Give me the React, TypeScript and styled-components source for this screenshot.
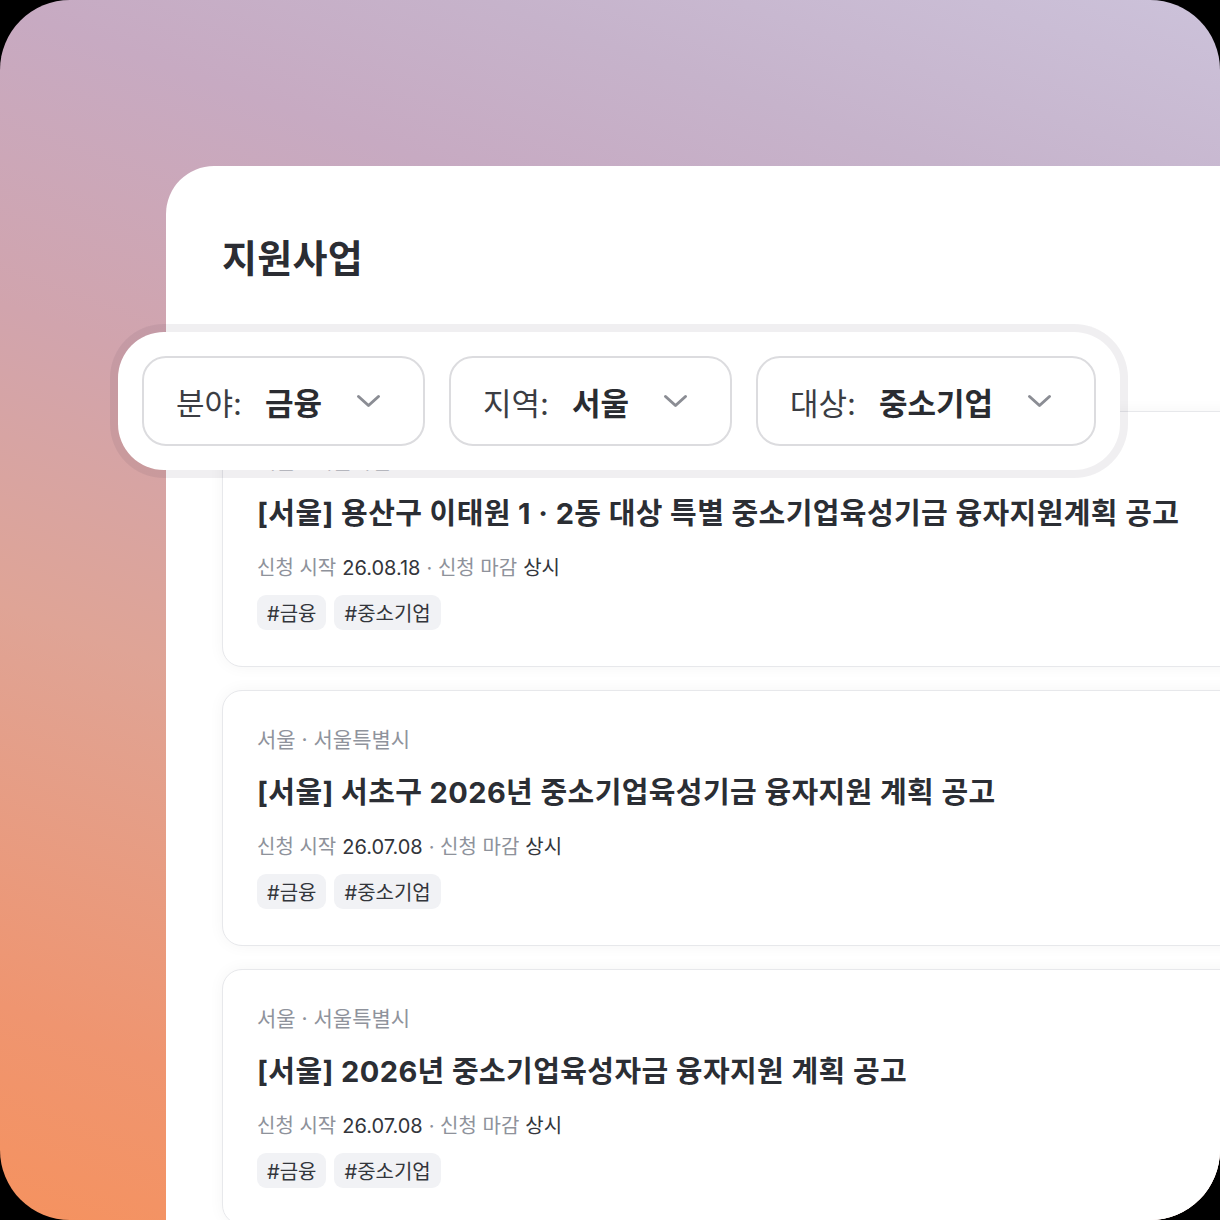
import * as React from "react";
import styled, { createGlobalStyle } from "styled-components";

const GlobalStyle = createGlobalStyle`
  html, body {
    margin: 0;
    padding: 0;
    background: #000;
  }
  * {
    box-sizing: border-box;
  }
  body {
    font-family: Inter, "Noto Sans CJK KR", "Noto Sans", sans-serif;
  }
`;

const filters = [
  { label: "분야:", value: "금융" },
  { label: "지역:", value: "서울" },
  { label: "대상:", value: "중소기업" },
];

const notices = [
  {
    region: "서울 · 서울특별시",
    title: "[서울] 용산구 이태원 1 · 2동 대상 특별 중소기업육성기금 융자지원계획 공고",
    start: "26.08.18",
    end: "상시",
    tags: ["#금융", "#중소기업"],
  },
  {
    region: "서울 · 서울특별시",
    title: "[서울] 서초구 2026년 중소기업육성기금 융자지원 계획 공고",
    start: "26.07.08",
    end: "상시",
    tags: ["#금융", "#중소기업"],
  },
  {
    region: "서울 · 서울특별시",
    title: "[서울] 2026년 중소기업육성자금 융자지원 계획 공고",
    start: "26.07.08",
    end: "상시",
    tags: ["#금융", "#중소기업"],
  },
];

function Chevron() {
  return (
    <ChevronIcon width="25" height="14" viewBox="0 0 25 14" fill="none">
      <polyline
        points="2.5 2.5 12.5 11.5 22.5 2.5"
        stroke="currentColor"
        strokeWidth="3"
        strokeLinecap="round"
        strokeLinejoin="round"
      />
    </ChevronIcon>
  );
}

export default function App() {
  return (
    <>
      <GlobalStyle />
      <Frame>
        <Panel>
          <PageTitle>지원사업</PageTitle>

          <FilterBar>
            {filters.map((f) => (
              <FilterBox key={f.label}>
                <FilterLabel>{f.label}</FilterLabel>
                <FilterValue>{f.value}</FilterValue>
                <Chevron />
              </FilterBox>
            ))}
          </FilterBar>

          <List>
            {notices.map((n, i) => (
              <Card key={i}>
                <Region>{n.region}</Region>
                <CardTitle>{n.title}</CardTitle>
                <Meta>
                  <MetaLabel>신청 시작</MetaLabel>
                  <MetaValue>{n.start}</MetaValue>
                  <MetaLabel>· 신청 마감</MetaLabel>
                  <MetaValue>{n.end}</MetaValue>
                </Meta>
                <Tags>
                  {n.tags.map((t) => (
                    <Tag key={t}>{t}</Tag>
                  ))}
                </Tags>
              </Card>
            ))}
          </List>
        </Panel>
      </Frame>
    </>
  );
}

const Frame = styled.div`
  width: 1220px;
  height: 1220px;
  border-radius: 70px;
  overflow: hidden;
  display: flex;
  padding: 166px 0 0 166px;
  background: linear-gradient(
    200deg,
    #ccc2da 0%,
    #c6b3cb 16%,
    #c7aac2 27%,
    #d1a4ad 45%,
    #dfa496 63%,
    #ef9570 87%,
    #f5925f 100%
  );
`;

const Panel = styled.div`
  flex: none;
  width: 1200px;
  background: #fff;
  border-top-left-radius: 48px;
  padding: 70px 0 0 56px;
`;

const PageTitle = styled.h1`
  margin: 0;
  font-size: 38px;
  line-height: 44px;
  font-weight: 700;
  color: #2b2d33;
  letter-spacing: 0.3px;
`;

const FilterBar = styled.div`
  position: relative;
  z-index: 2;
  display: flex;
  gap: 24px;
  width: fit-content;
  margin: 44px 0 0 -112px;
  padding: 24px;
  border: 8px solid rgba(40, 30, 50, 0.07);
  border-radius: 54px;
  background: #fff;
  background-clip: padding-box;
`;

const FilterBox = styled.div`
  display: flex;
  align-items: center;
  height: 90px;
  padding: 0 42px 0 32px;
  border: 2px solid #dcdcdf;
  border-radius: 24px;
  background: #fff;
  font-size: 31px;
`;

const FilterLabel = styled.span`
  font-weight: 400;
  color: #3b3d43;
`;

const FilterValue = styled.span`
  margin-left: 23px;
  font-weight: 700;
  color: #2a2c31;
`;

const ChevronIcon = styled.svg`
  margin-left: 34px;
  color: #8b8d94;
  flex: none;
`;

const List = styled.div`
  display: flex;
  flex-direction: column;
  gap: 23px;
  width: 1100px;
  margin-top: -67px;
`;

const Card = styled.div`
  background: #fff;
  border: 1.5px solid #e7e8eb;
  border-radius: 20px;
  padding: 35px 34px 36px;
  box-shadow: 0 0 16px rgba(20, 20, 40, 0.045);
`;

const Region = styled.div`
  font-size: 21px;
  line-height: 28px;
  color: #8f939c;
`;

const CardTitle = styled.div`
  margin-top: 21px;
  font-size: 29px;
  line-height: 36px;
  font-weight: 700;
  color: #2b2e34;
  letter-spacing: 0.4px;
`;

const Meta = styled.div`
  display: flex;
  gap: 6px;
  margin-top: 23px;
  font-size: 20px;
  line-height: 26px;
`;

const MetaLabel = styled.span`
  color: #8e929b;
`;

const MetaValue = styled.span`
  color: #33353b;
`;

const Tags = styled.div`
  display: flex;
  gap: 8px;
  margin-top: 14px;
`;

const Tag = styled.span`
  display: inline-flex;
  align-items: center;
  height: 35px;
  padding: 0 10px;
  border-radius: 9px;
  background: #f1f2f5;
  font-size: 20px;
  color: #33363c;
`;
